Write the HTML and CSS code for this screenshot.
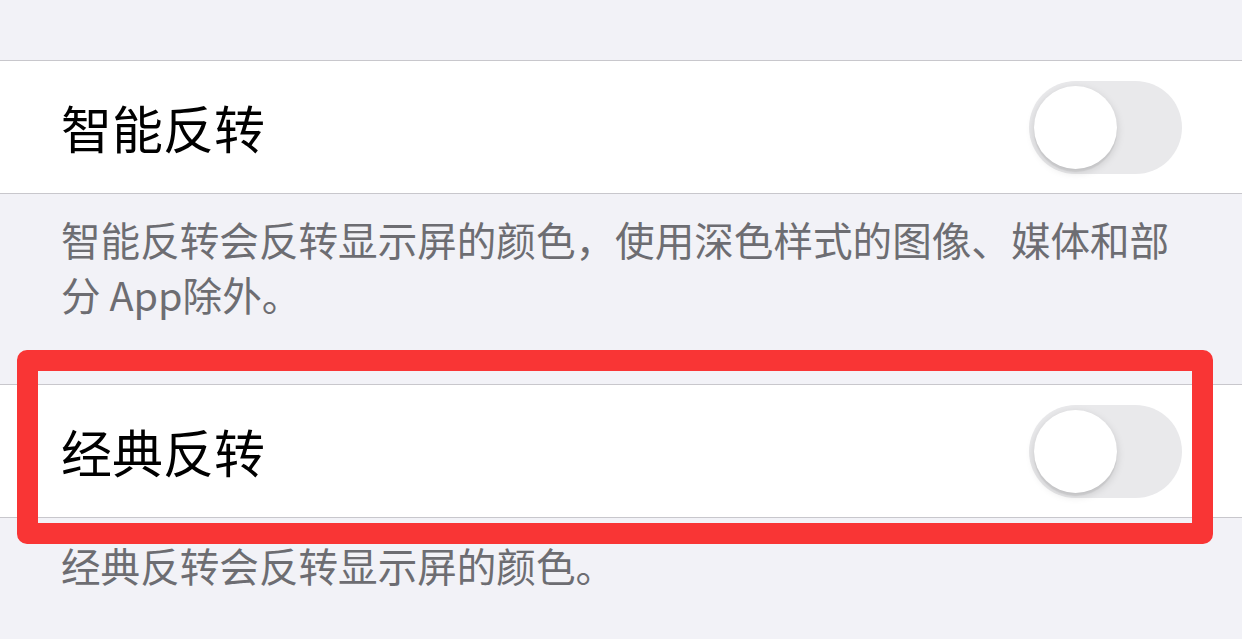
FILE: index.html
```html
<!DOCTYPE html>
<html lang="zh-CN">
<head>
<meta charset="utf-8">
<link rel="stylesheet" href="styles.css">
</head>
<body>
  <div class="page">
    <div class="top-space"></div>
    <div class="group">
      <div class="row">
        <span class="label">智能反转</span>
        <div class="toggle"><div class="knob"></div></div>
      </div>
    </div>
    <p class="footer footer-first">智能反转会反转显示屏的颜色，使用深色样式的图像、媒体和部分 App除外。</p>
    <div class="group highlighted">
      <div class="row">
        <span class="label">经典反转</span>
        <div class="toggle"><div class="knob"></div></div>
      </div>
      <div class="highlight"></div>
    </div>
    <p class="footer footer-second">经典反转会反转显示屏的颜色。</p>
  </div>
</body>
</html>
```
FILE: styles.css
```css
html, body {
  margin: 0;
  padding: 0;
  background: #f2f2f7;
}
.page {
  width: 1242px;
  height: 639px;
  overflow: hidden;
  font-family: "Noto Sans CJK SC", "Noto Sans", sans-serif;
}
.top-space {
  height: 60px;
}
.group {
  position: relative;
  background: #ffffff;
  border-top: 1px solid #c8c7cc;
  border-bottom: 1px solid #c8c7cc;
}
.row {
  height: 132px;
  display: flex;
  align-items: center;
  justify-content: space-between;
  padding: 0 60px 0 61px;
}
.label {
  font-size: 51px;
  color: #000000;
  line-height: 1;
}
.toggle {
  position: relative;
  width: 153px;
  height: 93px;
  border-radius: 47px;
  background: #e9e9eb;
}
.knob {
  position: absolute;
  left: 5px;
  top: 5px;
  width: 83px;
  height: 83px;
  border-radius: 50%;
  background: #ffffff;
  box-shadow: 0 3px 8px rgba(0, 0, 0, 0.15), 0 3px 1px rgba(0, 0, 0, 0.06);
}
.footer {
  margin: 0;
  padding: 0 40px 0 61px;
  font-size: 39.6px;
  line-height: 55px;
  color: #6d6d72;
}
.footer-first {
  padding-top: 17px;
  padding-bottom: 63px;
}
.footer-second {
  padding-top: 19px;
}
.highlight {
  position: absolute;
  left: 17px;
  top: -35px;
  width: 1196px;
  height: 194px;
  box-sizing: border-box;
  border: 21px solid #f93535;
  border-radius: 10px;
}
```
